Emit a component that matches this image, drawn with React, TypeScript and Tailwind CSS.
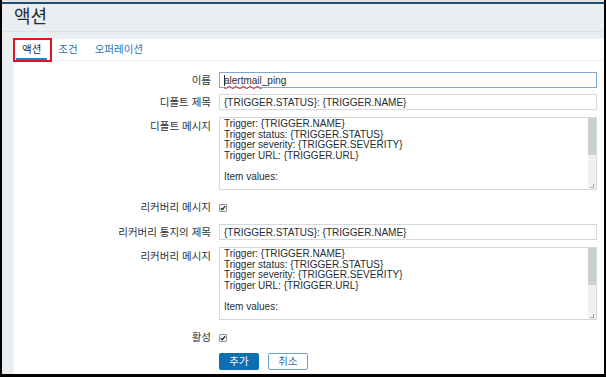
const FONT = '"Liberation Sans", "Noto Sans CJK KR", Arial, sans-serif';

const MESSAGE = [
  'Trigger: {TRIGGER.NAME}',
  'Trigger status: {TRIGGER.STATUS}',
  'Trigger severity: {TRIGGER.SEVERITY}',
  'Trigger URL: {TRIGGER.URL}',
  '',
  'Item values:',
  '',
  '1. {ITEM.NAME1} ({HOST.NAME1}:{ITEM.KEY1}): {ITEM.VALUE1}',
];

function Checkbox() {
  return (
    <span className="flex h-[8px] w-[8px] items-center justify-center rounded-[1px] border border-[#8a969c] bg-[#f4f6f7]">
      <svg width="6" height="6" viewBox="0 0 6 6" fill="none">
        <path d="M0.8 3.2 L2.3 4.7 L5.2 1.1" stroke="#2a2f33" strokeWidth="1.3" />
      </svg>
    </span>
  );
}

function TextArea() {
  return (
    <div className="relative h-[73px] w-full overflow-hidden border border-[#d3dadd] bg-white">
      <div className="pl-[4px] pr-[12px] pt-[1px] text-[10px] leading-[10.5px] text-[#1f2c33] whitespace-pre">
        {MESSAGE.map((line, i) => (
          <div key={i} className="h-[10.5px]">{line}</div>
        ))}
      </div>
      <div className="absolute right-0 top-0 flex h-full w-[8px] flex-col bg-[#f0f0f0]">
        <div className="h-[37px] bg-[#c9d0d3]" />
        <div className="flex-1" />
        <div className="mb-[1px] ml-[2px] h-[4px] w-[4px] border-b border-r border-[#a0a8ac]" />
      </div>
    </div>
  );
}

function Input({ value }: { value: string }) {
  return (
    <div className="flex h-[16px] w-full items-center border border-[#d3dadd] bg-white pl-[4px] text-[10px] text-[#1f2c33]">
      {value}
    </div>
  );
}

function Row({ label, children, top, className = '' }: { label: string; children: React.ReactNode; top?: boolean; className?: string }) {
  return (
    <div className={`grid grid-cols-[197px_1fr] gap-x-[8px] pr-[7px] ${top ? 'items-start' : 'items-center'} ${className}`}>
      <div className={`text-right text-[10.5px] leading-[15px] text-[#2c3438] ${top ? 'pt-[2px]' : ''}`}>{label}</div>
      <div>{children}</div>
    </div>
  );
}

export default function App() {
  return (
    <div className="flex h-[377px] w-[606px] flex-col bg-black pb-[3px] pl-[2px] pr-[2px]" style={{ fontFamily: FONT }}>
      <div className="flex flex-1 flex-col bg-[#ebeef0]">
        <div className="h-[2px] bg-[#dde4e8]" />
        <div className="h-[2px] bg-[#1d4f73]" />
        <div className="flex h-[27px] items-center pl-[12px] text-[18px] text-[#1f2c33]">액션</div>
        <div className="h-[8px] border-t border-[#dde2e5]" />
        <div className="flex flex-1">
          <div className="w-[11px]" />
          <div className="relative flex flex-1 flex-col border-l border-[#f3f5f6] bg-white">
            <div className="flex h-[22px] items-stretch border-b border-[#eceff1] text-[10.5px]">
              <div className="ml-[2px] flex items-center border-b-[2px] border-[#2f7fbf] px-[6px] pt-[2px] text-[#1f2c33]">액션</div>
              <div className="ml-[11px] flex items-center text-[#1f6fb3]">조건</div>
              <div className="ml-[17px] flex items-center text-[#1f6fb3]">오퍼레이션</div>
            </div>
            <div className="pointer-events-none absolute left-[-1px] top-[-1px] h-[24px] w-[39px] border-[2px] border-[#e0141e]" />

            <Row label="이름" className="mt-[11px]">
              <div className="flex h-[16px] w-full items-center border border-[#7ea7cc] bg-white pl-[4px] text-[10px] text-[#1f2c33]">
                <span className="mr-[-1px] h-[11px] w-[1px] bg-[#1f2c33]" />
                <span className="underline decoration-[#e02020] decoration-wavy decoration-[1px] underline-offset-[1px]">alertmail</span>
                <span>_ping</span>
              </div>
            </Row>
            <Row label="디폴트 제목" className="mt-[6px]">
              <Input value="{TRIGGER.STATUS}: {TRIGGER.NAME}" />
            </Row>
            <Row label="디폴트 메시지" top className="mt-[7px]">
              <TextArea />
            </Row>
            <Row label="리커버리 메시지" className="mt-[10px]">
              <Checkbox />
            </Row>
            <Row label="리커버리 통지의 제목" className="mt-[9px]">
              <Input value="{TRIGGER.STATUS}: {TRIGGER.NAME}" />
            </Row>
            <Row label="리커버리 메시지" top className="mt-[7px]">
              <TextArea />
            </Row>
            <Row label="활성" className="mt-[10px]">
              <Checkbox />
            </Row>
            <div className="mt-[8px] grid grid-cols-[197px_1fr] gap-x-[8px]">
              <div />
              <div className="flex gap-[9px]">
                <button className="flex h-[17px] w-[40px] items-center justify-center rounded-[2px] bg-[#0c6eb3] text-[10.5px] text-white">추가</button>
                <button className="flex h-[17px] w-[40px] items-center justify-center rounded-[2px] border border-[#6ea3d2] bg-white text-[10.5px] text-[#1f6fb3]">취소</button>
              </div>
            </div>
          </div>
        </div>
      </div>
    </div>
  );
}
